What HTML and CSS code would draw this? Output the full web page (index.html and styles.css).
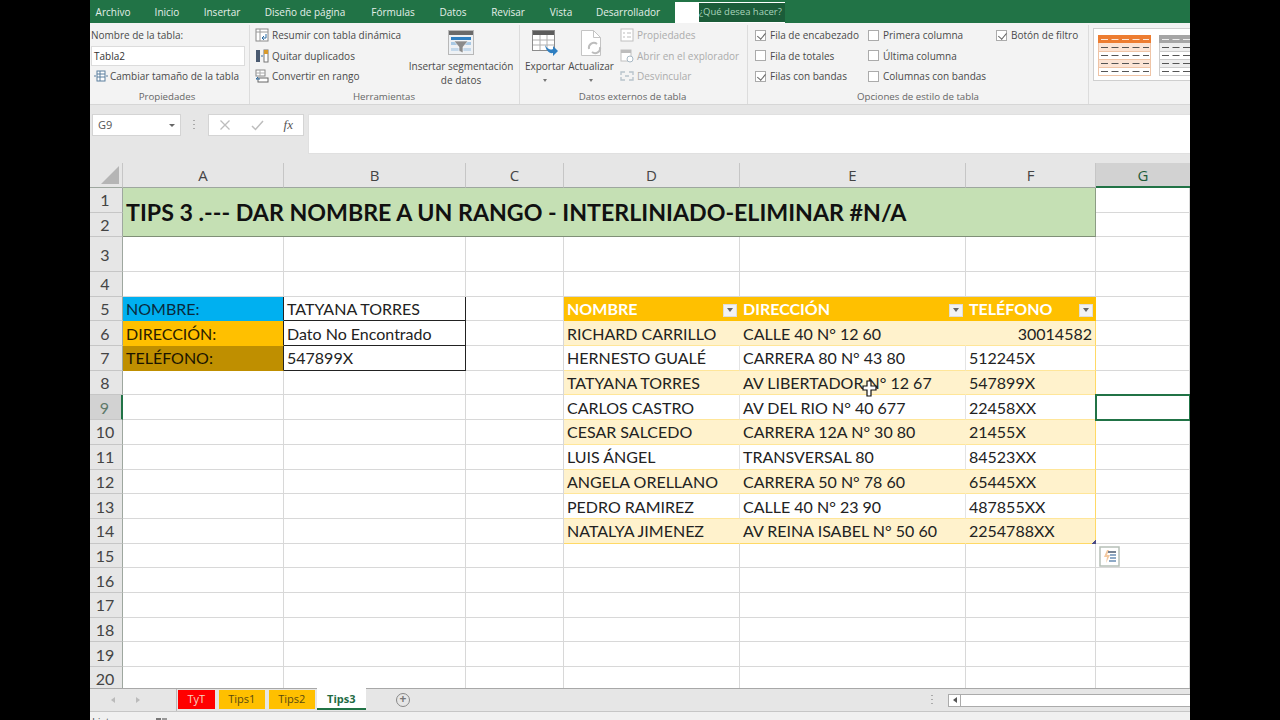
FILE: index.html
```html
<!DOCTYPE html>
<html>
<head>
    <meta name="viewport" content="width=device-width, initial-scale=1.0">
    <title>Tips3 - Excel</title>
    <link rel="stylesheet" href="styles.css">
</head>
<body>
<div class="app">

    <!-- tabs -->
    <div class="tabbar">
        <span class="tab" style="width:46px">Archivo</span>
        <span class="tab" style="width:62px">Inicio</span>
        <span class="tab" style="width:48px">Insertar</span>
        <span class="tab" style="width:118px">Diseño de página</span>
        <span class="tab" style="width:58px">Fórmulas</span>
        <span class="tab" style="width:62px">Datos</span>
        <span class="tab" style="width:48px">Revisar</span>
        <span class="tab" style="width:58px">Vista</span>
        <span class="tab" style="width:76px">Desarrollador</span>
        <div class="tab-active"><span class="tell-me">¿Qué desea hacer?</span></div>
    </div>

    <!-- ribbon -->
    <div class="ribbon">
        <div class="group g-props">
            <div class="group-body col">
                <div class="rib-row">Nombre de la tabla:</div>
                <div class="name-input">Tabla2</div>
                <div class="rib-row">
                    <svg class="ico ico-resize" viewBox="0 0 14 14"><rect x="3" y="2" width="8" height="10" fill="#fff" stroke="#5b7f9e"/><path d="M3 5h8M3 8h8M6 2v10M0 7h2M12 7h2" stroke="#5b7f9e" fill="none"/></svg>
                    Cambiar tamaño de la tabla
                </div>
            </div>
            <div class="group-label">Propiedades</div>
        </div>

        <div class="group g-tools">
            <div class="group-body">
                <div class="col tool-list">
                    <div class="rib-row">
                        <svg class="ico" viewBox="0 0 14 14"><rect x="1" y="1" width="12" height="12" fill="#fff" stroke="#8a8a8a"/><path d="M1 4h12M5 1v12" stroke="#9a9a9a"/><path d="M11 6v4H7M7 10l2-2M7 10l2 2" stroke="#2f6ea5" fill="none"/></svg>
                        Resumir con tabla dinámica
                    </div>
                    <div class="rib-row">
                        <svg class="ico" viewBox="0 0 14 14"><rect x="1" y="1" width="4" height="12" fill="#4a5a70"/><rect x="9" y="1" width="4" height="12" fill="#fff" stroke="#777"/><rect x="9" y="1" width="4" height="4" fill="#d89a2c"/><path d="M6 7h2" stroke="#2f6ea5"/></svg>
                        Quitar duplicados
                    </div>
                    <div class="rib-row">
                        <svg class="ico" viewBox="0 0 14 14"><rect x="1" y="1" width="9" height="6" fill="#fff" stroke="#888"/><path d="M1 4h9M5 1v6" stroke="#aaa"/><rect x="3" y="9" width="10" height="4" fill="#fff" stroke="#666"/><path d="M1 10h4M1 10l2-2" stroke="#2f6ea5" fill="none"/></svg>
                        Convertir en rango
                    </div>
                </div>
                <div class="big-btn slicer">
                    <svg class="big-ico" width="26" height="26" viewBox="0 0 26 26"><rect x="0.5" y="0.5" width="25" height="24" fill="#eef1f4" stroke="#b8b8b8"/><rect x="1" y="1" width="24" height="4" fill="#6a6a6a"/><rect x="3" y="7" width="20" height="3" fill="#2f7fc1"/><rect x="3" y="12" width="20" height="3" fill="#a9c9e4"/><rect x="3" y="18" width="20" height="3" fill="#c4d8ea"/><path d="M6 11h14l-5 6v6l-4-2v-4z" fill="#8b8b8b" stroke="#fff" stroke-width="0.6"/></svg>
                    <span class="big-text">Insertar segmentación<br>de datos</span>
                </div>
            </div>
            <div class="group-label">Herramientas</div>
        </div>

        <div class="group g-extern">
            <div class="group-body">
                <div class="big-btn export">
                    <svg class="big-ico" width="27" height="26" viewBox="0 0 27 26"><rect x="0.5" y="0.5" width="22" height="20" fill="#fff" stroke="#8c8c8c"/><rect x="1" y="1" width="21" height="4" fill="#5c5c5c"/><path d="M1 10h21M1 15h21M8 5v15M15 5v15" stroke="#b0b0b0"/><path d="M13 15c3 5 6 5 8 4v-3l5 5-5 5v-3c-4 1-7-3-8-8z" fill="#2f7fc1"/></svg>
                    <span class="big-text">Exportar</span>
                    <span class="mini-caret"></span>
                </div>
                <div class="big-btn refresh">
                    <svg class="big-ico" width="22" height="26" viewBox="0 0 22 26"><path d="M1.5 0.5h12l7 7v18h-19z" fill="#fff" stroke="#c4c4c4"/><path d="M13.5 0.5v7h7" fill="none" stroke="#c4c4c4"/><path d="M9 19a5 5 0 0 1 8-5M20 17a5 5 0 0 1-8 5" fill="none" stroke="#bdbdbd" stroke-width="2"/></svg>
                    <span class="big-text">Actualizar</span>
                    <span class="mini-caret"></span>
                </div>
                <div class="col off-list">
                    <div class="rib-row off">
                        <svg class="ico" viewBox="0 0 14 14"><rect x="1" y="1" width="12" height="12" fill="#fff" stroke="#c0c0c0"/><path d="M3 5h2M3 9h2M7 5h4M7 9h4" stroke="#bdbdbd"/></svg>
                        Propiedades
                    </div>
                    <div class="rib-row off">
                        <svg class="ico" viewBox="0 0 14 14"><rect x="1" y="1" width="10" height="11" fill="#fff" stroke="#c0c0c0"/><rect x="1" y="1" width="10" height="3" fill="#bdbdbd"/><circle cx="10" cy="10" r="3" fill="#fff" stroke="#a8b8c4"/></svg>
                        Abrir en el explorador
                    </div>
                    <div class="rib-row off">
                        <svg class="ico" viewBox="0 0 14 14"><path d="M1 6V3h4M13 6V3H9M1 8v3h4M13 8v3H9M5 7h4" fill="none" stroke="#b8c4cc" stroke-width="1.4"/></svg>
                        Desvincular
                    </div>
                </div>
            </div>
            <div class="group-label">Datos externos de tabla</div>
        </div>

        <div class="group g-options">
            <div class="group-body">
                <div class="col check-col" style="width:113px">
                    <div class="rib-row"><span class="chk on"></span>Fila de encabezado</div>
                    <div class="rib-row"><span class="chk"></span>Fila de totales</div>
                    <div class="rib-row"><span class="chk on"></span>Filas con bandas</div>
                </div>
                <div class="col check-col" style="width:128px">
                    <div class="rib-row"><span class="chk"></span>Primera columna</div>
                    <div class="rib-row"><span class="chk"></span>Última columna</div>
                    <div class="rib-row"><span class="chk"></span>Columnas con bandas</div>
                </div>
                <div class="col check-col">
                    <div class="rib-row"><span class="chk on"></span>Botón de filtro</div>
                </div>
            </div>
            <div class="group-label">Opciones de estilo de tabla</div>
        </div>

        <div class="gallery">
            <svg width="97" height="52" viewBox="0 0 97 52">
                <rect x="4.5" y="14.5" width="52" height="32" fill="#fff" stroke="#efc4a6"/>
                <rect x="4" y="6" width="53" height="8" fill="#ed7d31"/>
                <rect x="5" y="14" width="51" height="8" fill="#fbe4d5"/>
                <rect x="5" y="30" width="51" height="8" fill="#fbe4d5"/>
                <path d="M4 22.500h53M4 30.500h53M4 38.500h53" stroke="#efc4a6"/>
                <path d="M7 10.500h48" stroke="#fbe9dc" stroke-dasharray="7 3.500"/>
                <path d="M7 18.500h48M7 26.500h48M7 34.500h48M7 42.500h48" stroke="#555" stroke-dasharray="7 3.500"/>
                <rect x="65.5" y="14.500" width="40" height="32" fill="#fff" stroke="#ccc"/>
                <rect x="65" y="6" width="40" height="8" fill="#a5a5a5"/>
                <rect x="66" y="14" width="39" height="8" fill="#ededed"/>
                <rect x="66" y="30" width="39" height="8" fill="#ededed"/>
                <path d="M65 22.500h40M65 30.500h40M65 38.500h40" stroke="#ccc"/>
                <path d="M68 10.500h30" stroke="#eee" stroke-dasharray="7 3.500"/>
                <path d="M68 18.500h30M68 26.500h30M68 34.500h30M68 42.500h30" stroke="#555" stroke-dasharray="7 3.500"/>
            </svg>
        </div>
    </div>

    <!-- formula bar -->
    <div class="formula-bar">
        <div class="name-box">G9<span class="nb-caret"></span></div>
        <div class="fb-dots"></div>
        <div class="fb-buttons">
            <svg width="12" height="12" viewBox="0 0 12 12"><path d="M1.5 1.5l9 9M10.5 1.5l-9 9" stroke="#bdbdbd" stroke-width="1.3"/></svg>
            <svg width="13" height="12" viewBox="0 0 13 12"><path d="M1 7l3.500 3.500L12 2" fill="none" stroke="#bdbdbd" stroke-width="1.5"/></svg>
            <span class="fx">fx</span>
        </div>
        <div class="fb-input"></div>
    </div>

    <!-- sheet -->
    <div class="sheet">
        <div class="grid">
            <div class="hd corner"><span class="corner-tri"></span></div>
            <div class="hd">A</div><div class="hd">B</div><div class="hd">C</div><div class="hd">D</div><div class="hd">E</div><div class="hd">F</div><div class="hd hd-sel">G</div>

            <div class="rh">1</div><div class="c title">TIPS 3 .--- DAR NOMBRE A UN RANGO - INTERLINIADO-ELIMINAR #N/A</div><div class="c"></div>
            <div class="rh">2</div><div class="c"></div>

            <div class="rh">3</div><div class="c"></div><div class="c"></div><div class="c"></div><div class="c"></div><div class="c"></div><div class="c"></div><div class="c"></div>
            <div class="rh">4</div><div class="c"></div><div class="c"></div><div class="c"></div><div class="c"></div><div class="c"></div><div class="c"></div><div class="c"></div>

            <div class="rh">5</div><div class="c lab-blue">NOMBRE:</div><div class="c boxed">TATYANA TORRES</div><div class="c"></div>
            <div class="c th">NOMBRE<span class="filter"></span></div><div class="c th">DIRECCIÓN<span class="filter"></span></div><div class="c th">TELÉFONO<span class="filter"></span></div><div class="c"></div>

            <div class="rh">6</div><div class="c lab-amber">DIRECCIÓN:</div><div class="c boxed">Dato No Encontrado</div><div class="c"></div>
            <div class="c band">RICHARD CARRILLO</div><div class="c band">CALLE 40 N° 12 60</div><div class="c band last num">30014582</div><div class="c"></div>

            <div class="rh">7</div><div class="c lab-brown">TELÉFONO:</div><div class="c boxed">547899X</div><div class="c"></div>
            <div class="c plain">HERNESTO GUALÉ</div><div class="c plain">CARRERA 80 N° 43 80</div><div class="c plain last">512245X</div><div class="c"></div>

            <div class="rh">8</div><div class="c"></div><div class="c"></div><div class="c"></div>
            <div class="c band">TATYANA TORRES</div><div class="c band">AV LIBERTADOR N° 12 67</div><div class="c band last">547899X</div><div class="c"></div>

            <div class="rh rh-sel">9</div><div class="c"></div><div class="c"></div><div class="c"></div>
            <div class="c plain">CARLOS CASTRO</div><div class="c plain">AV DEL RIO N° 40 677</div><div class="c plain last">22458XX</div><div class="c sel"></div>

            <div class="rh">10</div><div class="c"></div><div class="c"></div><div class="c"></div>
            <div class="c band">CESAR SALCEDO</div><div class="c band">CARRERA 12A N° 30 80</div><div class="c band last">21455X</div><div class="c"></div>

            <div class="rh">11</div><div class="c"></div><div class="c"></div><div class="c"></div>
            <div class="c plain">LUIS ÁNGEL</div><div class="c plain">TRANSVERSAL 80</div><div class="c plain last">84523XX</div><div class="c"></div>

            <div class="rh">12</div><div class="c"></div><div class="c"></div><div class="c"></div>
            <div class="c band">ANGELA ORELLANO</div><div class="c band">CARRERA 50 N° 78 60</div><div class="c band last">65445XX</div><div class="c"></div>

            <div class="rh">13</div><div class="c"></div><div class="c"></div><div class="c"></div>
            <div class="c plain">PEDRO RAMIREZ</div><div class="c plain">CALLE 40 N° 23 90</div><div class="c plain last">487855XX</div><div class="c"></div>

            <div class="rh">14</div><div class="c"></div><div class="c"></div><div class="c"></div>
            <div class="c band end">NATALYA JIMENEZ</div><div class="c band end">AV REINA ISABEL N° 50 60</div><div class="c band end last">2254788XX<span class="handle"></span></div><div class="c"></div>

            <div class="rh">15</div><div class="c"></div><div class="c"></div><div class="c"></div><div class="c"></div><div class="c"></div><div class="c"></div>
            <div class="c"><svg class="quick" width="21" height="21" viewBox="0 0 21 21"><rect x="1" y="1" width="19" height="19" fill="#fff" stroke="#b6c0b8" stroke-width="1.500"/><path d="M8 4L5 11h3l-1 6 4-8H8l2-5z" fill="#f3c9a0"/><path d="M9 6h8" stroke="#4a5a70" stroke-width="1.500"/><path d="M11 9h6M11 12h6M10 15h7" stroke="#6b8fb5" stroke-width="1.500"/></svg></div>
            <div class="rh">16</div><div class="c"></div><div class="c"></div><div class="c"></div><div class="c"></div><div class="c"></div><div class="c"></div><div class="c"></div>
            <div class="rh">17</div><div class="c"></div><div class="c"></div><div class="c"></div><div class="c"></div><div class="c"></div><div class="c"></div><div class="c"></div>
            <div class="rh">18</div><div class="c"></div><div class="c"></div><div class="c"></div><div class="c"></div><div class="c"></div><div class="c"></div><div class="c"></div>
            <div class="rh">19</div><div class="c"></div><div class="c"></div><div class="c"></div><div class="c"></div><div class="c"></div><div class="c"></div><div class="c"></div>
            <div class="rh">20</div><div class="c"></div><div class="c"></div><div class="c"></div><div class="c"></div><div class="c"></div><div class="c"></div><div class="c"></div>
        </div>
        <!-- mouse pointer -->
        <svg class="pointer" width="15" height="17" viewBox="0 0 15 17"><path d="M5 1h4v5h5v4H9v6H5v-6H1V6h4z" fill="#fff" stroke="#111" stroke-width="1.200"/></svg>
    </div>

    <!-- sheet tabs -->
    <div class="sheetbar">
        <div class="nav-arrows"><span class="arrow-l"></span><span class="arrow-r"></span></div>
        <div class="sheet-tabs">
            <span class="stab red">TyT</span>
            <span class="stab amber s1">Tips1</span>
            <span class="stab amber s2">Tips2</span>
            <span class="stab current">Tips3</span>
        </div>
        <span class="add-sheet">+</span>
        <span class="sb-dots"></span>
        <div class="hscroll"><span class="hs-btn"></span></div>
    </div>

    <div class="status">Listo
        <svg class="status-ico" width="12" height="8" viewBox="0 0 12 8"><rect x="0" y="3" width="5" height="5" fill="#777"/><rect x="6" y="3" width="5" height="5" fill="#999"/></svg>
    </div>
</div>
</body>
</html>
```

FILE: styles.css
```css
* {
    box-sizing: border-box;
}
body {
    margin: 0;
    background: #000;
    overflow: hidden;
}
.app {
    width: 1100px;
    height: 720px;
    margin-left: 90px;
    display: flex;
    flex-direction: column;
    background: #e6e6e6;
    overflow: hidden;
    font-family: "Open Sans", "Noto Sans", sans-serif;
}

/* tabs */
.tabbar {
    height: 23px;
    flex: none;
    display: flex;
    background: #217346;
    color: #e4efe9;
    font-size: 10px;
}
.tab {
    line-height: 25px;
    text-align: center;
    white-space: nowrap;
}
.tab-active {
    width: 110px;
    margin-left: 9px;
    margin-top: 2px;
    padding: 1px 0 0 24px;
    background: #fff;
    display: flex;
}
.tell-me {
    width: 86px;
    height: 19px;
    line-height: 18px;
    font-size: 9.500px;
    background: #1b5c39;
    color: #a8d3bb;
    white-space: nowrap;
    overflow: hidden;
}

/* ribbon */
.ribbon {
    height: 82px;
    flex: none;
    display: flex;
    background: #f3f3f3;
    border-bottom: 1px solid #d6d6d6;
    font-size: 10px;
    color: #4a4a4a;
}
.group {
    display: flex;
    flex-direction: column;
    border-right: 1px solid #dcdcdc;
    margin-top: 2px;
}
.g-props { width: 160px; padding-left: 1px; }
.g-tools { width: 270px; padding-left: 5px; }
.g-extern { width: 228px; }
.g-options { width: 341px; padding-left: 7px; }
.g-props .group-label { padding-right: 6px; }
.g-tools .group-label { padding-right: 6px; }
.g-extern .group-label { padding-right: 2px; }
.g-options .group-label { padding-right: 7px; }
.group-body {
    flex: 1;
    display: flex;
    min-height: 0;
}
.group-label {
    height: 15px;
    line-height: 15px;
    text-align: center;
    font-size: 9.700px;
    color: #666;
}
.col {
    display: flex;
    flex-direction: column;
}
.rib-row {
    height: 20.500px;
    display: flex;
    align-items: center;
    white-space: nowrap;
    flex: none;
}
.off {
    color: #acacac;
}
.name-input {
    width: 154px;
    height: 20px;
    flex: none;
    line-height: 18px;
    padding-left: 2px;
    background: #fff;
    border: 1px solid #dcdcdc;
    color: #333;
}
.ico {
    width: 14px;
    height: 14px;
    margin-right: 3px;
    flex: none;
}
.ico-resize {
    margin: 0 2px 0 3px;
}
.tool-list {
    width: 154px;
}
.big-btn {
    display: flex;
    flex-direction: column;
    align-items: center;
    text-align: center;
    white-space: nowrap;
}
.big-ico {
    margin-top: 5px;
    flex: none;
}
.big-text {
    line-height: 14px;
    margin-top: 3px;
}
.slicer {
    width: 104px;
}
.export {
    width: 50px;
}
.refresh {
    width: 42px;
}
.mini-caret {
    margin-top: 6px;
    border: 2px solid transparent;
    border-top: 3px solid #777;
    border-bottom: 0;
}
.off-list {
    margin-left: 8px;
}
.chk {
    width: 11px;
    height: 11px;
    margin-right: 4px;
    background: #fff;
    border: 1px solid #ababab;
    flex: none;
}
.chk.on {
    position: relative;
}
.chk.on::after {
    content: "";
    position: absolute;
    left: 2.500px;
    top: 0;
    width: 3.500px;
    height: 7px;
    border: solid #666;
    border-width: 0 1px 1px 0;
    transform: rotate(40deg);
}
.gallery {
    margin: 5px 0 0 4px;
    width: 97px;
    height: 53px;
    background: #fff;
    border: 1px solid #cfcfcf;
    border-right: 0;
    overflow: hidden;
    flex: none;
}
.gallery svg {
    display: block;
}

/* formula bar */
.formula-bar {
    height: 58px;
    flex: none;
    display: flex;
    align-items: flex-start;
    padding: 9px 0 0 2px;
    background: #e6e6e6;
    font-size: 11px;
    color: #555;
}
.name-box {
    width: 89px;
    height: 22px;
    line-height: 20px;
    padding-left: 5px;
    background: #fff;
    border: 1px solid #d4d4d4;
    display: flex;
    justify-content: space-between;
    align-items: center;
}
.nb-caret {
    margin-right: 5px;
    border: 3px solid transparent;
    border-top: 3px solid #666;
    border-bottom: 0;
}
.fb-dots {
    width: 2px;
    height: 10px;
    margin: 6px 13px 0 12px;
    background: repeating-linear-gradient(#aaa 0 1px, transparent 1px 4px);
}
.fb-buttons {
    width: 96px;
    height: 22px;
    display: flex;
    align-items: center;
    justify-content: space-between;
    padding: 0 10px;
    background: #fff;
    border: 1px solid #d4d4d4;
}
.fx {
    font-family: "Liberation Serif", serif;
    font-style: italic;
    font-size: 13px;
    color: #555;
}
.fb-input {
    flex: 1;
    height: 40px;
    margin-left: 4px;
    background: #fff;
    border: 1px solid #e0e0e0;
    border-right: 0;
}

/* sheet */
.sheet {
    flex: 1;
    min-height: 0;
    position: relative;
    background: #fff;
    overflow: hidden;
}
.grid {
    display: grid;
    grid-template-columns: 33px 161px 182px 98px 176px 226px 130px 94px;
    grid-template-rows: 25px 24.500px 24.500px 35px repeat(17, 24.700px);
    font-family: Lato, "Open Sans", sans-serif;
    font-size: 16px;
    color: #222;
}
.hd {
    background: #e6e6e6;
    border-right: 1px solid #c6c6c6;
    border-bottom: 1px solid #9ea79f;
    text-align: center;
    line-height: 25px;
    font-size: 15px;
    color: #444;
    font-family: "Open Sans", sans-serif;
}
.hd-sel {
    background: #d2d2d2;
    border-right: 0;
    border-bottom: 2px solid #217346;
    color: #1f5c3a;
}
.corner {
    position: relative;
}
.corner-tri {
    position: absolute;
    right: 3px;
    bottom: 3px;
    border-style: solid;
    border-width: 0 0 18px 18px;
    border-color: transparent transparent #b5b5b5 transparent;
}
.rh {
    background: #e6e6e6;
    border-right: 1px solid #9ea79f;
    border-bottom: 1px solid #c6c6c6;
    padding-right: 2px;
    display: flex;
    align-items: center;
    justify-content: center;
    font-size: 16px;
    color: #444;
}
.rh-sel {
    background: #d2d2d2;
    border-right: 2px solid #217346;
    color: #5f7a6a;
}
.c {
    border-right: 1px solid #d8d8d8;
    border-bottom: 1px solid #d8d8d8;
    display: flex;
    align-items: center;
    padding: 0 3px;
    white-space: nowrap;
    min-width: 0;
    position: relative;
}
.title {
    grid-column: span 6;
    grid-row: span 2;
    background: #c5e0b4;
    border-right: 1px solid #8c9c84;
    border-bottom: 1px solid #7f8f77;
    font-weight: 700;
    font-size: 23.200px;
    padding-left: 3px;
    color: #111;
}
.lab-blue { background: #00b0f0; border-color: #00b0f0 #222 #00b0f0 #00b0f0; color: #0a2a3c; }
.lab-amber { background: #ffc000; border-color: #ffc000 #222 #ffc000 #ffc000; color: #2a2000; }
.lab-brown { background: #bf8f00; border-color: #bf8f00 #222 #bf8f00 #bf8f00; color: #1a1400; }
.boxed {
    border: 1px solid #222;
    border-top-width: 0;
    border-left-width: 0;
}
.th {
    background: #ffc000;
    color: #fff;
    font-weight: 700;
    border-right-color: #ffc000;
    border-bottom-color: #ffc000;
    justify-content: space-between;
    padding-right: 2px;
}
.filter {
    width: 14px;
    height: 13px;
    margin-top: 3px;
    background: #f2f2f2;
    border: 1px solid #ddd;
    display: flex;
    align-items: center;
    justify-content: center;
}
.filter::after {
    content: "";
    border: 3px solid transparent;
    border-top: 4px solid #666;
    border-bottom: 0;
}
.band {
    background: #fff2cc;
    border-right-color: #fff2cc;
    border-bottom-color: #ffe699;
}
.plain {
    border-right-color: #e4e4e4;
    border-bottom-color: #ffe699;
}
.last {
    border-right-color: #ffd966;
}
.end {
    border-bottom-color: #ffd966;
}
.num {
    justify-content: flex-end;
}
.handle {
    position: absolute;
    right: -1px;
    bottom: -1px;
    width: 5px;
    height: 5px;
    background: linear-gradient(135deg, transparent 50%, #4a4a86 50%);
}
.sel {
    outline: 2px solid #217346;
    outline-offset: -1px;
    z-index: 1;
}
.quick {
    position: absolute;
    left: 3px;
    top: 2px;
    z-index: 2;
}
.pointer {
    position: absolute;
    left: 772px;
    top: 217px;
}

/* sheet tabs */
.sheetbar {
    height: 24px;
    flex: none;
    display: flex;
    align-items: center;
    background: #e6e6e6;
    border-top: 1px solid #a8a8a8;
    border-bottom: 1px solid #c6c6c6;
    font-size: 11px;
    color: #444;
}
.nav-arrows {
    width: 86px;
    display: flex;
    gap: 21px;
    padding-left: 21px;
}
.arrow-l, .arrow-r {
    border: 3px solid transparent;
}
.arrow-l { border-right: 4px solid #bbb; border-left: 0; }
.arrow-r { border-left: 4px solid #bbb; border-right: 0; }
.sheet-tabs {
    display: flex;
    align-items: flex-start;
    height: 100%;
    border-left: 1px solid #bbb;
    width: 190px;
}
.stab {
    height: 19px;
    margin-top: 1px;
    line-height: 18px;
    text-align: center;
}
.red { width: 37px; background: #f00; color: #f5d5c0; margin-left: 1px; }
.amber { background: #ffc000; color: #5a4a10; }
.s1 { width: 47px; margin-left: 4px; }
.s2 { width: 46px; margin-left: 4px; }
.current {
    width: 50px;
    height: 22px;
    margin: -1px 0 0 2px;
    line-height: 22px;
    background: #fff;
    color: #1f6b43;
    font-weight: 700;
    border-bottom: 2px solid #217346;
}
.add-sheet {
    width: 14px;
    height: 14px;
    margin-left: 30px;
    border: 1.500px solid #888;
    border-radius: 50%;
    line-height: 10px;
    text-align: center;
    font-size: 12px;
    font-weight: 700;
    color: #777;
}
.sb-dots {
    width: 2px;
    height: 10px;
    margin-left: 521px;
    background: repeating-linear-gradient(#aaa 0 1px, transparent 1px 4px);
}
.hscroll {
    flex: 1;
    height: 13px;
    margin-left: 15px;
    background: #fff;
    border: 1px solid #ababab;
    border-right: 0;
}
.hs-btn {
    display: flex;
    width: 12px;
    height: 100%;
    border-right: 1px solid #ababab;
    align-items: center;
    justify-content: center;
}
.hs-btn::after {
    content: "";
    border: 3px solid transparent;
    border-right: 4px solid #555;
    border-left: 0;
}
.status {
    height: 8px;
    flex: none;
    position: relative;
    padding: 4px 0 0 2px;
    background: #f0f0f0;
    font-size: 11px;
    line-height: 11px;
    color: #555;
    overflow: hidden;
}
.status-ico {
    position: absolute;
    left: 66px;
    top: 3px;
}
```
